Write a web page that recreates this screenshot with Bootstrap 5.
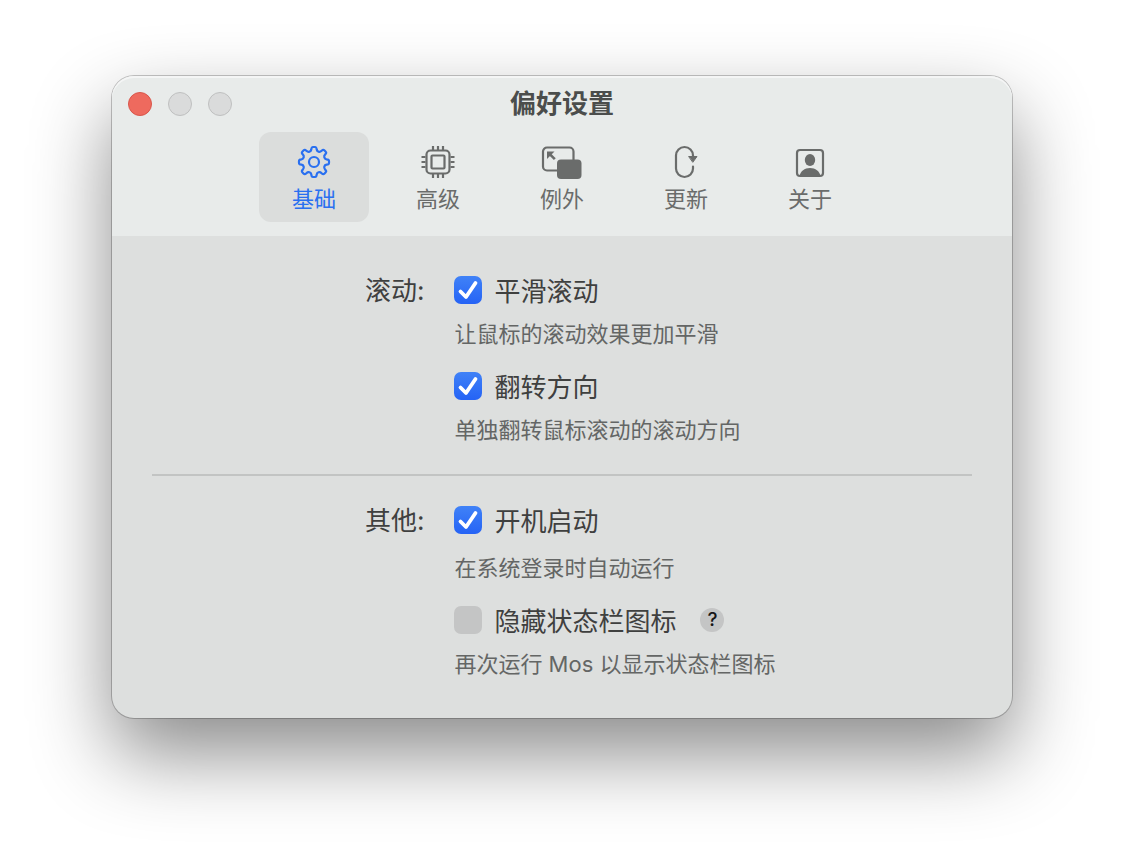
<!DOCTYPE html>
<html lang="zh-CN">
<head>
<meta charset="utf-8">
<meta name="viewport" content="width=device-width, initial-scale=1">
<title>偏好设置</title>
<link href="https://cdn.jsdelivr.net/npm/bootstrap@5.3.0/dist/css/bootstrap.min.css" rel="stylesheet">
<style>
  body { font-family: Inter, "Noto Sans CJK SC", sans-serif; font-size: 22px; color: #3f403f; background: #fff; }
  .stage { padding: 76px 10%; }
  .prefs { background: #dddfde; border-radius: 22px; box-shadow: 0 0 0 1px rgba(0,0,0,.22), 0 36px 80px rgba(0,0,0,.46); }
  .prefs-head { background: #e8ebea; border-radius: 22px 22px 0 0; box-shadow: inset 0 2px 0 #f4f5f5; padding-bottom: 14px; }
  .titlebar { display: grid; grid-template-columns: 1fr auto 1fr; height: 56px; padding: 0 16px; }
  .titlebar h1 { padding-top: 10px; font-size: 26px; line-height: 36px; font-weight: 700; color: #4b4d4c; }
  .light { width: 24px; height: 24px; padding: 0; border: 1px solid #bfc0c0; border-radius: 50%; background: #dadbdb; }
  .light-close { background: #ee6a5e; border-color: #d9564b; }
  .tabs { gap: 14px; }
  .tabs .nav-link { display: flex; flex-direction: column; align-items: center; justify-content: flex-start; width: 110px; height: 90px; padding: 9px 0 0; border-radius: 12px; color: #6a6c6b; line-height: 32px; }
  .tabs .nav-link.active { background: #dbdddc; color: #2a70f0; }
  .prefs-body { padding: 36px 40px 38px; }
  .group { display: grid; grid-template-columns: 272px 1fr; column-gap: 30px; }
  .group-name { padding-top: 1px; text-align: right; font-size: 26px; line-height: 36px; }
  .option { gap: 12px; height: 36px; padding: 0; margin: 0; font-size: 26px; line-height: 36px; }
  .option label { padding-top: 4px; }
  .option .form-check-input { width: 28px; height: 28px; margin: 0; float: none; border: 0; border-radius: 7px; background-color: #c4c5c5; }
  .option .form-check-input:checked[type=checkbox] { background-color: #2b6af5; background-size: 100% 100%;
    background-image: url("data:image/svg+xml,%3Csvg xmlns='http://www.w3.org/2000/svg' viewBox='0 0 28 28'%3E%3Cpath d='M6.5 15.5 12 21 21.5 7' fill='none' stroke='%23fff' stroke-width='3.8' stroke-linecap='round' stroke-linejoin='round'/%3E%3C/svg%3E"), linear-gradient(#4082f7, #2563f5); }
  .hint { line-height: 32px; margin: 10px 0 18px; color: #646665; }
  .hint-roomy { margin-top: 14px; }
  .hint:last-child { margin-bottom: 0; }
  .rule { height: 2px; margin: 28px 0 26px; border: 0; opacity: 1; background: #c2c4c3; }
  .help { width: 24px; height: 24px; padding: 0; margin-left: 12px; border: 0; border-radius: 50%; background: #c4c5c5; color: #161616; font-size: 19px; line-height: 24px; font-weight: 500; }
</style>
</head>
<body>
<main class="stage min-vh-100">
  <section class="prefs" aria-labelledby="title">
    <header class="prefs-head">
      <div class="titlebar">
        <div class="d-flex gap-3 pt-3">
          <button type="button" class="light light-close" aria-label="关闭"></button>
          <button type="button" class="light" aria-label="最小化"></button>
          <button type="button" class="light" aria-label="缩放"></button>
        </div>
        <h1 id="title" class="m-0">偏好设置</h1>
      </div>
      <nav class="tabs nav nav-pills justify-content-center">
        <button type="button" class="nav-link active" aria-current="page">
          <svg width="44" height="42" viewBox="0 0 44 42" fill="none" stroke="currentColor" stroke-width="2.2" stroke-linejoin="round"><circle cx="22" cy="21" r="5"/><path d="M19.300 8.500Q19.500 6 21 6H23Q24.500 6 24.700 8.500Q25 10.200 26.600 10.700Q28.200 11.200 29.600 9.800Q31.200 8.200 32.300 9.300L33.700 10.700Q34.800 11.800 33.200 13.400Q31.800 14.800 32.300 16.400Q32.800 18 34.500 18.300Q37 18.500 37 20V22Q37 23.500 34.500 23.700Q32.800 24 32.300 25.600Q31.800 27.200 33.200 28.600Q34.800 30.200 33.700 31.300L32.300 32.700Q31.200 33.800 29.600 32.200Q28.200 30.800 26.600 31.300Q25 31.800 24.700 33.500Q24.500 36 23 36H21Q19.500 36 19.300 33.500Q19 31.800 17.400 31.300Q15.800 30.800 14.400 32.200Q12.800 33.800 11.700 32.700L10.300 31.300Q9.200 30.200 10.800 28.600Q12.200 27.200 11.700 25.600Q11.200 24 9.500 23.700Q7 23.500 7 22V20Q7 18.500 9.500 18.300Q11.200 18 11.700 16.400Q12.200 14.800 10.800 13.400Q9.200 11.800 10.300 10.700L11.700 9.300Q12.800 8.200 14.400 9.800Q15.800 11.200 17.400 10.700Q19 10.200 19.300 8.500Z"/></svg>
          基础
        </button>
        <button type="button" class="nav-link">
          <svg width="44" height="42" viewBox="0 0 44 42" fill="none" stroke="currentColor" stroke-width="2.200"><rect x="10.500" y="9.500" width="23" height="23" rx="4"/><rect x="15.500" y="14.500" width="13" height="13" rx="1"/><path d="M17 5v4M22 5v4M27 5v4M17 33v4M22 33v4M27 33v4M5.500 16h4M5.500 21h4M5.500 26h4M34.500 16h4M34.500 21h4M34.500 26h4"/></svg>
          高级
        </button>
        <button type="button" class="nav-link">
          <svg width="44" height="42" viewBox="0 0 44 42" fill="none" stroke="currentColor" stroke-width="2.200"><path d="M18 29.500H7a4 4 0 0 1-4-4V10.500a4 4 0 0 1 4-4h22.500a4 4 0 0 1 4 4V19"/><rect x="17" y="18.500" width="24.500" height="19.500" rx="4" fill="currentColor" stroke="none"/><path d="M14.800 18.200 9.500 12.800" stroke-width="2.600"/><path d="M7 10.500V18l7.500-7.500z" fill="currentColor" stroke="none"/></svg>
          例外
        </button>
        <button type="button" class="nav-link">
          <svg width="44" height="42" viewBox="0 0 44 42" fill="none" stroke="currentColor" stroke-width="2.200" stroke-linecap="round"><path d="M29 15v-.500a8.500 8.500 0 0 0-17 0v13a8.500 8.500 0 0 0 17 0V25.500"/><path d="M25 15.500h8L29 21z" fill="currentColor" stroke-width="1" stroke-linejoin="round"/></svg>
          更新
        </button>
        <button type="button" class="nav-link">
          <svg width="44" height="42" viewBox="0 0 44 42" fill="none" stroke="currentColor" stroke-width="2.200"><rect x="9" y="9" width="26" height="26" rx="3"/><ellipse cx="22" cy="19" rx="5.200" ry="6" fill="currentColor" stroke="none"/><path d="M11.500 35c1-5 5-8 10.500-8s9.500 3 10.500 8z" fill="currentColor" stroke="none"/></svg>
          关于
        </button>
      </nav>
    </header>

    <form class="prefs-body">
      <div class="group" role="group" aria-labelledby="g-scroll">
        <div id="g-scroll" class="group-name">滚动:</div>
        <div>
          <div class="option form-check d-flex align-items-center">
            <input class="form-check-input" type="checkbox" id="smooth" checked>
            <label for="smooth">平滑滚动</label>
          </div>
          <p class="hint">让鼠标的滚动效果更加平滑</p>
          <div class="option form-check d-flex align-items-center">
            <input class="form-check-input" type="checkbox" id="reverse" checked>
            <label for="reverse">翻转方向</label>
          </div>
          <p class="hint">单独翻转鼠标滚动的滚动方向</p>
        </div>
      </div>
      <hr class="rule">
      <div class="group" role="group" aria-labelledby="g-other">
        <div id="g-other" class="group-name">其他:</div>
        <div>
          <div class="option form-check d-flex align-items-center">
            <input class="form-check-input" type="checkbox" id="launch" checked>
            <label for="launch">开机启动</label>
          </div>
          <p class="hint hint-roomy">在系统登录时自动运行</p>
          <div class="option form-check d-flex align-items-center">
            <input class="form-check-input" type="checkbox" id="hide-icon">
            <label for="hide-icon">隐藏状态栏图标</label>
            <button type="button" class="help">?</button>
          </div>
          <p class="hint">再次运行 Mos 以显示状态栏图标</p>
        </div>
      </div>
    </form>
  </section>
</main>
<script src="https://cdn.jsdelivr.net/npm/bootstrap@5.3.0/dist/js/bootstrap.bundle.min.js"></script>
</body>
</html>
